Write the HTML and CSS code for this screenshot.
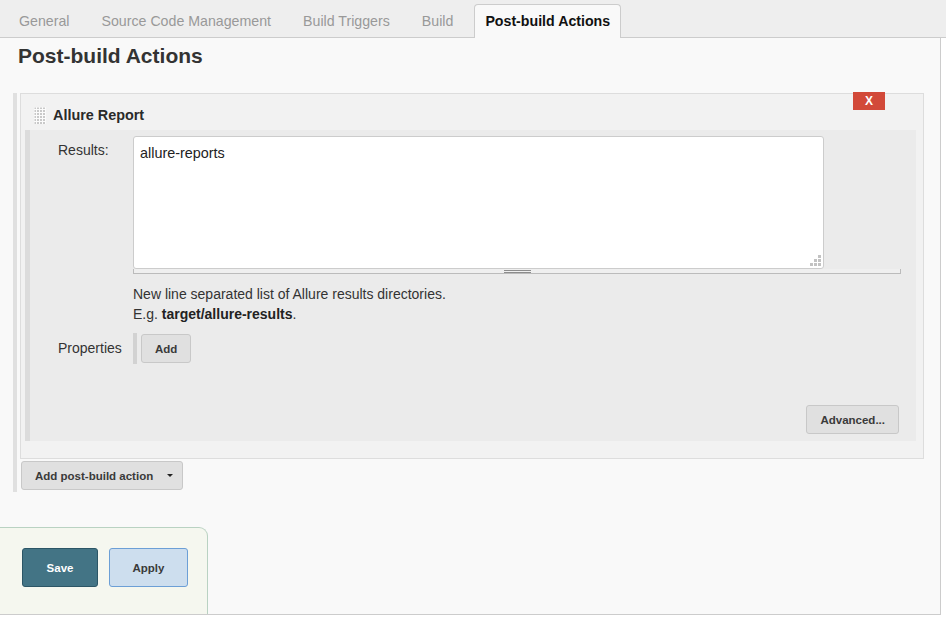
FILE: index.html
```html
<!DOCTYPE html>
<html>
<head>
<meta charset="utf-8">
<title>Post-build Actions</title>
<link rel="stylesheet" href="styles.css">
</head>
<body>
<nav class="tabbar">
  <span class="tab">General</span>
  <span class="tab">Source Code Management</span>
  <span class="tab">Build Triggers</span>
  <span class="tab">Build</span>
  <span class="tab tab-active">Post-build Actions</span>
</nav>
<main class="main">
  <h2 class="section-title">Post-build Actions</h2>
  <div class="section">
    <div class="step">
      <button class="delete-btn">X</button>
      <div class="step-header">
        <svg class="grip" width="12" height="17" viewBox="0 0 12 17">
          <defs>
            <pattern id="gripdots" width="3" height="3" patternUnits="userSpaceOnUse">
              <rect width="2" height="2" fill="#c9c9c9"/>
            </pattern>
          </defs>
          <rect width="12" height="17" fill="#fbfbfb"/>
          <rect x="0.5" y="0.5" width="12" height="17" fill="url(#gripdots)"/>
        </svg>
        <span class="step-title">Allure Report</span>
      </div>
      <div class="step-body">
        <div class="field-label label-results">Results:</div>
        <div class="field">
          <div class="ta-wrap">
            <textarea class="ta">allure-reports</textarea>
            <svg class="ta-resize" width="11" height="11" viewBox="0 0 11 11">
              <rect x="8" y="0" width="3" height="3"/>
              <rect x="4" y="4" width="3" height="3"/>
              <rect x="8" y="4" width="3" height="3"/>
              <rect x="0" y="8" width="3" height="3"/>
              <rect x="4" y="8" width="3" height="3"/>
              <rect x="8" y="8" width="3" height="3"/>
            </svg>
          </div>
          <div class="ta-handle"><span class="ta-grip"></span></div>
          <div class="help">New line separated list of Allure results directories.<br>E.g. <b>target/allure-results</b>.</div>
        </div>
        <div class="field-label label-props">Properties</div>
        <div class="field">
          <div class="repeat"><button class="btn">Add</button></div>
        </div>
        <div class="field advanced-row"><button class="btn btn-adv">Advanced...</button></div>
      </div>
    </div>
    <button class="btn btn-add-action">Add post-build action <span class="caret"></span></button>
  </div>
  <div class="bottom-bar">
    <button class="btn-save">Save</button>
    <button class="btn-apply">Apply</button>
  </div>
</main>
</body>
</html>
```

FILE: styles.css
```css
body {
  margin: 0;
  font-family: "Liberation Sans", Arial, sans-serif;
  color: #333;
  background: #fff;
}

.tabbar {
  display: flex;
  align-items: flex-end;
  gap: 10px;
  height: 38px;
  box-sizing: border-box;
  padding-left: 8px;
  background: #eeeeee;
  border-bottom: 1px solid #cccccc;
}

.tab {
  height: 34px;
  box-sizing: border-box;
  margin-bottom: -1px;
  padding: 0 10px;
  border: 1px solid transparent;
  border-bottom: 0;
  line-height: 33px;
  font-size: 14.2px;
  color: #999;
  white-space: nowrap;
}

.tab-active {
  background: #f9f9f9;
  border-color: #cccccc;
  border-radius: 4px 4px 0 0;
  color: #111;
  font-weight: bold;
}

.main {
  width: 941px;
  height: 577px;
  box-sizing: border-box;
  background: #f9f9f9;
  border-right: 1px solid #cccccc;
  border-bottom: 1px solid #cccccc;
  padding-top: 6px;
  display: flex;
  flex-direction: column;
}

.section-title {
  margin: 0 0 25px 18px;
  font-size: 21px;
  line-height: 24px;
  font-weight: bold;
  color: #333;
}

.section {
  margin-left: 13px;
  border-left: 4px solid #e0e0e0;
  padding: 0 0 2px 3px;
  display: flex;
  flex-direction: column;
}

.step {
  position: relative;
  margin-right: 16px;
  border: 1px solid #dddddd;
  background: #f2f2f2;
  padding: 0 7px 17px 4px;
}

.delete-btn {
  position: absolute;
  top: -2px;
  right: 38px;
  width: 32px;
  height: 18px;
  padding: 0;
  border: 0;
  background: #d24939;
  color: #fff;
  font: bold 12px "Liberation Sans", Arial, sans-serif;
  line-height: 18px;
}

.step-header {
  display: flex;
  align-items: center;
  gap: 7px;
  padding: 12px 0 6px 9px;
  line-height: 18px;
}

.grip {
  display: block;
}

.step-title {
  font-size: 14.4px;
  font-weight: bold;
  color: #2a2a2a;
}

.step-body {
  border-left: 5px solid #dcdcdc;
  background: #ebebeb;
  padding: 6px 15px 7px 0;
  display: grid;
  grid-template-columns: 103px 1fr;
  row-gap: 9px;
}

.field-label {
  grid-column: 1;
  padding-left: 28px;
  font-size: 14px;
  line-height: 18px;
  color: #333;
}

.label-results {
  padding-top: 5px;
}

.label-props {
  padding-top: 6px;
}

.field {
  grid-column: 2;
}

.ta-wrap {
  position: relative;
  width: 691px;
}

.ta {
  display: block;
  width: 691px;
  height: 133px;
  box-sizing: border-box;
  border: 1px solid #cccccc;
  border-radius: 3px;
  padding: 8px 6px 6px;
  background: #fff;
  font: 14.4px "Liberation Sans", Arial, sans-serif;
  color: #222;
  resize: none;
  outline: none;
}

.ta-resize {
  position: absolute;
  right: 3px;
  bottom: 3px;
  fill: #c2c2c2;
}

.ta-handle {
  height: 5px;
  box-sizing: border-box;
  border: 1px solid #bbbbbb;
  border-top: 0;
  background: #efefef;
  display: flex;
  justify-content: center;
}

.ta-grip {
  width: 27px;
  height: 1px;
  margin-top: 1px;
  border-top: 1px solid #8c8c8c;
  border-bottom: 1px solid #8c8c8c;
}

.help {
  margin-top: 10px;
  font-size: 14px;
  line-height: 20px;
  color: #333;
}

.help b {
  color: #222;
}

.repeat {
  display: flex;
  border-left: 4px solid #d2d2d2;
  padding: 1px 0 1px 4px;
}

.btn {
  height: 29px;
  box-sizing: border-box;
  padding: 0 13px;
  border: 1px solid #c8c8c8;
  border-radius: 3px;
  background: #e0e0e0;
  color: #3a3a3a;
  font: bold 11.5px "Liberation Sans", Arial, sans-serif;
}

.advanced-row {
  display: flex;
  justify-content: flex-end;
  margin-top: 32px;
  padding-right: 2px;
}

.btn-add-action {
  align-self: flex-start;
  margin: 2px 0 0 1px;
  display: flex;
  align-items: center;
  gap: 14px;
  padding: 0 9px 0 13px;
}

.caret {
  width: 0;
  height: 0;
  border-left: 3px solid transparent;
  border-right: 3px solid transparent;
  border-top: 3px solid #222;
  margin-top: -1px;
}

.bottom-bar {
  margin-top: auto;
  width: 208px;
  box-sizing: border-box;
  background: #f5f7ef;
  border-top: 1px solid #b9d2c2;
  border-right: 1px solid #b9d2c2;
  border-top-right-radius: 9px;
  padding: 20px 0 27px 22px;
  display: flex;
  gap: 11px;
}

.btn-save,
.btn-apply {
  height: 39px;
  box-sizing: border-box;
  border-radius: 3px;
  font: bold 11.5px "Liberation Sans", Arial, sans-serif;
  padding: 0;
}

.btn-save {
  width: 76px;
  background: #437485;
  border: 1px solid #2c5666;
  color: #fff;
}

.btn-apply {
  width: 79px;
  background: #cddeee;
  border: 1px solid #6c9fd6;
  color: #3a3a3a;
}
```
